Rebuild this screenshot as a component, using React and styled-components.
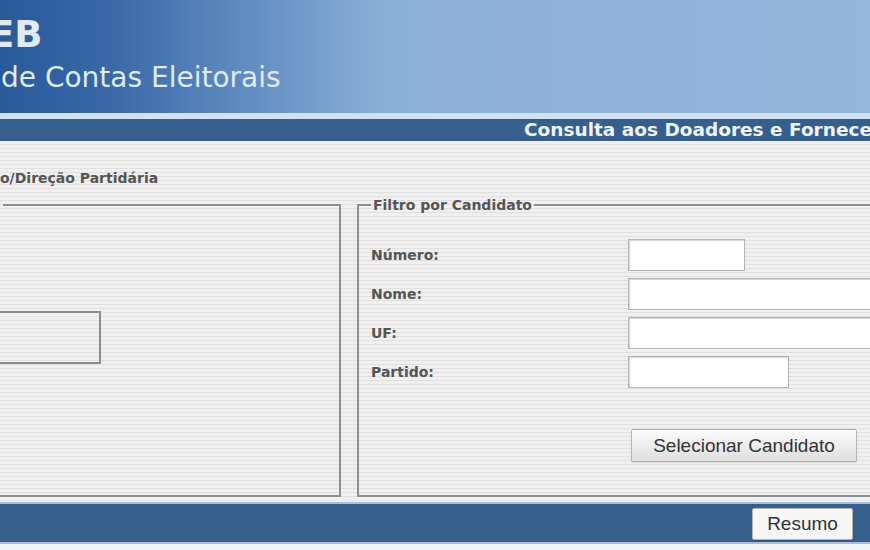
import React from 'react'
import styled, { createGlobalStyle } from 'styled-components'

const GlobalStyle = createGlobalStyle`
  html, body {
    margin: 0;
    padding: 0;
    background: #f3f5f8;
  }
  body {
    width: 870px;
    height: 550px;
    overflow: hidden;
    font-family: "DejaVu Sans", Verdana, sans-serif;
  }
`

const Page = styled.div`
  width: 870px;
  height: 550px;
  overflow: hidden;
  display: flex;
  flex-direction: column;
`

const Header = styled.header`
  height: 113px;
  flex: none;
  background: linear-gradient(90deg, #2b5a9b 0%, #3867a6 12%, #6690c4 30%, #8db0d8 45%, #95b6db 100%);
  color: #dfebf6;
  display: flex;
  flex-direction: column;
  padding-top: 15px;
  box-sizing: border-box;
`

const Brand = styled.div`
  font-weight: bold;
  font-size: 37px;
  line-height: 40px;
  margin-left: -11px;
`

const Subtitle = styled.div`
  font-size: 28px;
  line-height: 34px;
  margin-top: 6px;
  margin-left: 1px;
`

const Stripe = styled.div`
  height: ${p => p.h}px;
  flex: none;
  background: ${p => p.color};
`

const TitleBar = styled.div`
  height: 22px;
  flex: none;
  background: #365f8e;
  color: #eef4fb;
  font-weight: bold;
  font-size: 18.5px;
  line-height: 22px;
  white-space: nowrap;
  overflow: hidden;
  padding-left: 524px;
`

const Content = styled.main`
  flex: none;
  height: 357px;
  box-sizing: border-box;
  padding-top: 29px;
  background: repeating-linear-gradient(180deg, #f1efef 0 3px, #e1e0e0 3px 4px);
  overflow: hidden;
`

const SectionTitle = styled.div`
  font-weight: bold;
  font-size: 14px;
  line-height: 16px;
  color: #555;
`

const Columns = styled.div`
  display: grid;
  grid-template-columns: 361px 533px;
  column-gap: 16px;
  margin-left: -20px;
  margin-top: 11px;
  height: 300px;
`

const Fieldset = styled.fieldset`
  margin: 0;
  min-width: 0;
  border: 2px solid #8f8f8f;
  padding: 0 12px;
  box-sizing: border-box;
`

const Legend = styled.legend`
  padding: 0 2px;
  font-weight: bold;
  font-size: 14px;
  line-height: 16px;
  color: #555;
`

const SelectBox = styled.div`
  margin-top: 98px;
  margin-left: -14px;
  width: 121px;
  height: 53px;
  box-sizing: border-box;
  border: 2px solid #8b8b8b;
`

const Form = styled.div`
  display: grid;
  grid-template-columns: 257px 1fr;
  row-gap: 7px;
  align-items: center;
  padding-top: 26px;
`

const Label = styled.label`
  font-weight: bold;
  font-size: 14px;
  color: #555;
`

const Input = styled.input`
  width: ${p => p.w}px;
  height: 32px;
  box-sizing: border-box;
  border: 1px solid #b4b4b4;
  box-shadow: inset 1px 1px 0 #d6d6d6;
  background: #fff;
  margin: 0;
  padding: 2px 4px;
`

const Button = styled.button`
  font-family: "Liberation Sans", Arial, sans-serif;
  font-size: 19px;
  color: #333;
  height: ${p => p.h}px;
  padding: 0 12px;
  border: 1px solid #b3b3b3;
  border-radius: 2px;
  background: ${p => p.plain ? '#f7f7f7' : 'linear-gradient(180deg, #fbfbfb 0%, #ececec 55%, #dedede 100%)'};
  box-shadow: 0 1px 1px rgba(0, 0, 0, 0.12);
`

const ActionCell = styled.div`
  grid-column: 2;
  margin-top: 34px;
  margin-left: 3px;
`

const BottomBar = styled.footer`
  height: 42px;
  flex: none;
  background: #365f8e;
  border-top: 2px solid #a9c0da;
  border-bottom: 2px solid #a9c0da;
  box-sizing: border-box;
  display: flex;
  justify-content: flex-end;
  align-items: flex-start;
  padding: 4px 17px 0 0;
`

const fields = [
  { label: 'Número:', w: 117 },
  { label: 'Nome:', w: 300 },
  { label: 'UF:', w: 300 },
  { label: 'Partido:', w: 161 },
]

export default function App() {
  return (
    <Page>
      <GlobalStyle />
      <Header>
        <Brand>EB</Brand>
        <Subtitle>de Contas Eleitorais</Subtitle>
      </Header>
      <Stripe h={6} color="#d1e1f0" />
      <TitleBar>Consulta aos Doadores e Fornecedores</TitleBar>
      <Content>
        <SectionTitle>o/Direção Partidária</SectionTitle>
        <Columns>
          <Fieldset>
            <Legend>&nbsp;</Legend>
            <SelectBox />
          </Fieldset>
          <Fieldset>
            <Legend>Filtro por Candidato</Legend>
            <Form>
              {fields.map(f => (
                <React.Fragment key={f.label}>
                  <Label>{f.label}</Label>
                  <Input w={f.w} />
                </React.Fragment>
              ))}
              <ActionCell>
                <Button h={33} style={{ width: 226 }}>Selecionar Candidato</Button>
              </ActionCell>
            </Form>
          </Fieldset>
        </Columns>
      </Content>
      <Stripe h={4} color="#eceff2" />
      <BottomBar>
        <Button h={32} plain style={{ width: 101 }}>Resumo</Button>
      </BottomBar>
    </Page>
  )
}
